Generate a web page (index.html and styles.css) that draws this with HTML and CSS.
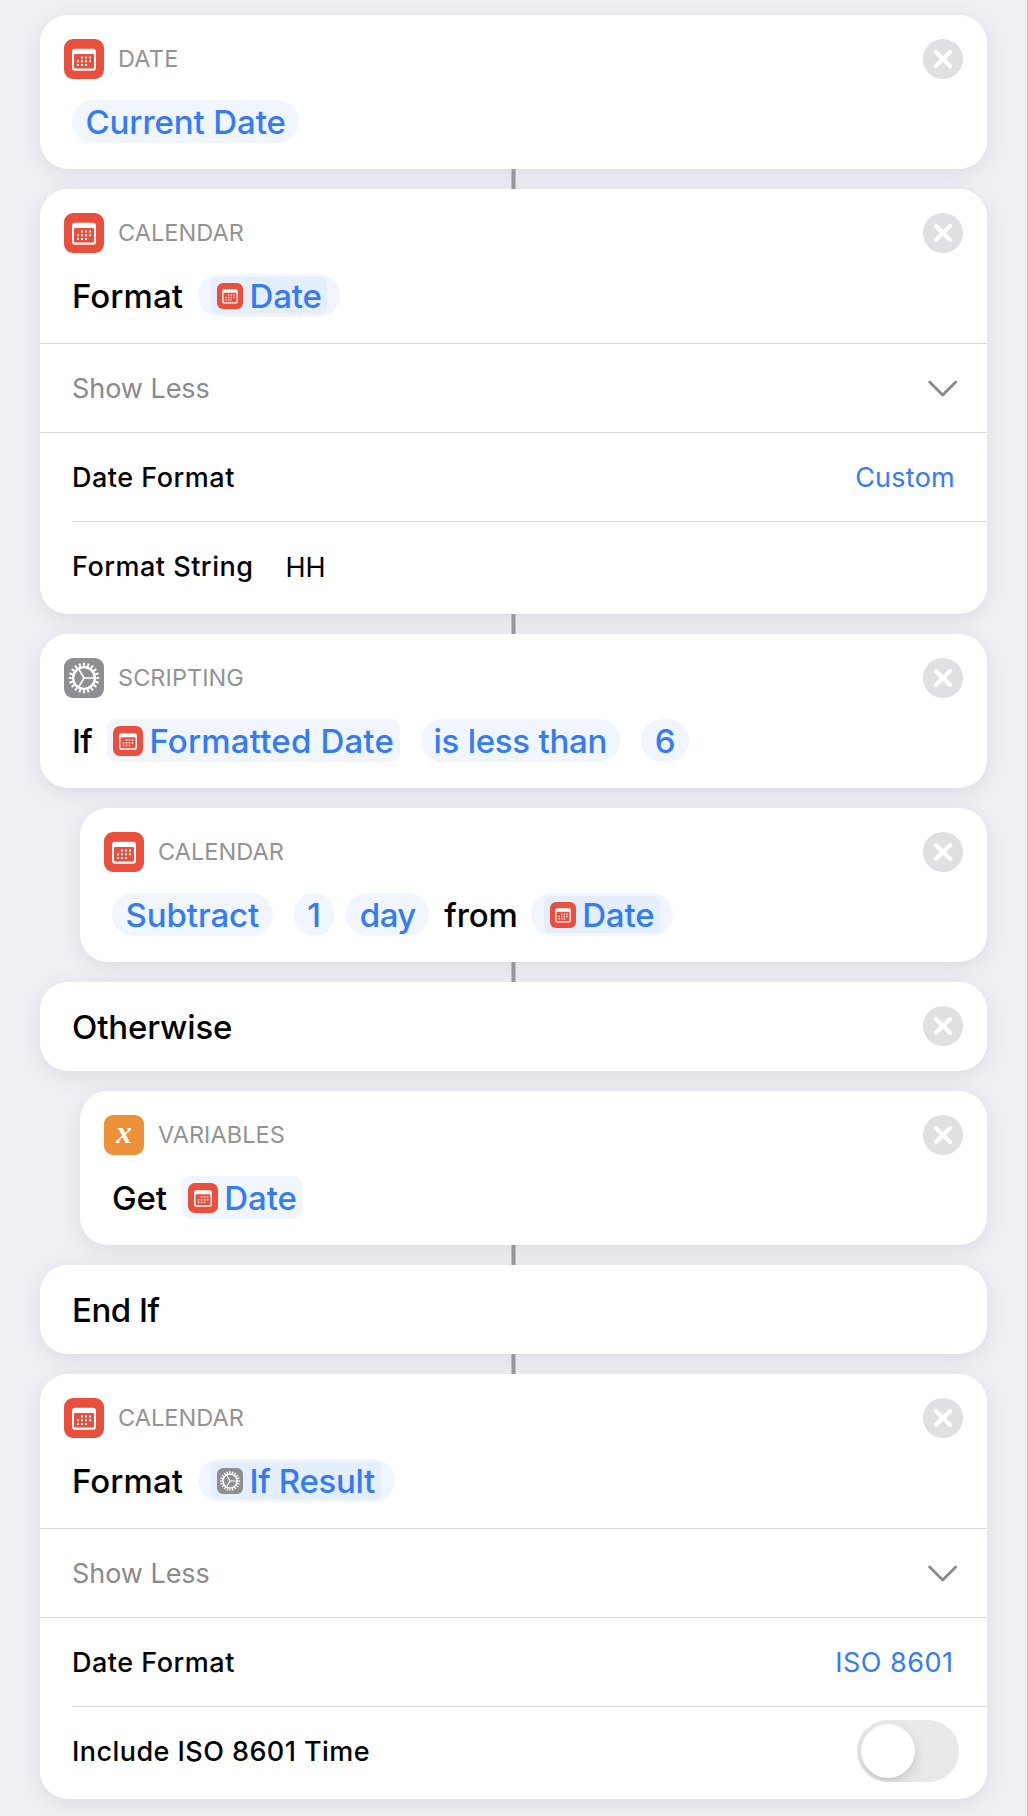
FILE: index.html
```
<!DOCTYPE html>
<html lang="en">
<head>
<meta charset="utf-8">
<title>Shortcut</title>
<link rel="stylesheet" href="styles.css">
</head>
<body>
<svg class="defs" aria-hidden="true">
  <symbol id="calendar" viewBox="0 0 40 40">
    <path fill="#fff" fill-rule="evenodd" d="M11 9.7h18a3 3 0 0 1 3 3V28.700a3 3 0 0 1-3 3H11a3 3 0 0 1-3-3V12.700a3 3 0 0 1 3-3zM11.300 14.900a1.300 1.300 0 0 0-1.300 1.300V28.300a1.300 1.300 0 0 0 1.300 1.300h17.400A1.300 1.300 0 0 0 30 28.300V16.200a1.300 1.300 0 0 0-1.300-1.300z"/>
    <path stroke="#fff" stroke-width="2" stroke-dasharray="2 2" d="M17 18.500h10M13 22.300h14M13 26.100h10"/>
  </symbol>
  <symbol id="gear" viewBox="0 0 40 40">
    <g fill="none" stroke="#fff">
      <circle cx="20" cy="20" r="10.900" stroke-width="2.400"/>
      <circle cx="20" cy="20" r="13.300" stroke-width="3.800" pathLength="40" stroke-dasharray="0.9 1.1" stroke-dashoffset="0.45"/>
      <path stroke-width="1.700" d="M20 20h10.500M20 20l-5.300-9.200M20 20l-5.300 9.200"/>
    </g>
  </symbol>
  <symbol id="close" viewBox="0 0 40 40">
    <circle cx="20" cy="20" r="20" fill="#e0e0e2"/>
    <path fill="none" stroke="#fff" stroke-width="4.200" stroke-linecap="round" d="M12.900 12.900l14.200 14.200M27.100 12.900L12.900 27.100"/>
  </symbol>
  <symbol id="chevron" viewBox="0 0 30 18">
    <path fill="none" stroke="#8a8a8e" stroke-width="2.800" stroke-linecap="round" stroke-linejoin="round" d="M1.700 2l13 13 13-13"/>
  </symbol>
</svg>
<main class="flow">
  <section class="card">
    <header class="head"><svg class="icon red"><use href="#calendar"/></svg><span class="kind wide">DATE</span><svg class="close"><use href="#close"/></svg></header>
    <div class="action"><span class="pill">Current Date</span></div>
  </section>
  <div class="link line"></div>
  <section class="card">
    <header class="head"><svg class="icon red"><use href="#calendar"/></svg><span class="kind">CALENDAR</span><svg class="close"><use href="#close"/></svg></header>
    <div class="action"><span class="word format">Format</span><span class="pill holder"><span class="inner"><svg class="mini red"><use href="#calendar"/></svg>Date</span></span></div>
    <div class="row toggle-row"><span class="muted">Show Less</span><svg class="chevron"><use href="#chevron"/></svg></div>
    <div class="row"><span class="label">Date Format</span><span class="choice">Custom</span></div>
    <div class="row inset last"><span class="label">Format String</span><span class="entry">HH</span></div>
  </section>
  <div class="link line"></div>
  <section class="card">
    <header class="head"><svg class="icon gray"><use href="#gear"/></svg><span class="kind">SCRIPTING</span><svg class="close"><use href="#close"/></svg></header>
    <div class="action"><span class="word if">If</span><span class="pill token long"><svg class="mini red"><use href="#calendar"/></svg>Formatted Date</span><span class="pill cond">is less than</span><span class="pill">6</span></div>
  </section>
  <div class="link"></div>
  <section class="card nested">
    <header class="head"><svg class="icon red"><use href="#calendar"/></svg><span class="kind">CALENDAR</span><svg class="close"><use href="#close"/></svg></header>
    <div class="action"><span class="pill">Subtract</span><span class="pill">1</span><span class="pill unit">day</span><span class="word from">from</span><span class="pill holder"><span class="inner"><svg class="mini red"><use href="#calendar"/></svg>Date</span></span></div>
  </section>
  <div class="link line"></div>
  <section class="card bar"><span class="word">Otherwise</span><svg class="close"><use href="#close"/></svg></section>
  <div class="link"></div>
  <section class="card nested">
    <header class="head"><svg class="icon orange" viewBox="0 0 40 40"><text class="var" x="20" y="27.700">x</text></svg><span class="kind">VARIABLES</span><svg class="close"><use href="#close"/></svg></header>
    <div class="action"><span class="word">Get</span><span class="pill token"><svg class="mini red"><use href="#calendar"/></svg>Date</span></div>
  </section>
  <div class="link line"></div>
  <section class="card bar"><span class="word end">End If</span></section>
  <div class="link line"></div>
  <section class="card">
    <header class="head"><svg class="icon red"><use href="#calendar"/></svg><span class="kind">CALENDAR</span><svg class="close"><use href="#close"/></svg></header>
    <div class="action"><span class="word format">Format</span><span class="pill holder"><span class="inner result"><svg class="mini gray"><use href="#gear"/></svg>If Result</span></span></div>
    <div class="row toggle-row"><span class="muted">Show Less</span><svg class="chevron"><use href="#chevron"/></svg></div>
    <div class="row"><span class="label">Date Format</span><span class="choice iso">ISO 8601</span></div>
    <div class="row inset last"><span class="label long-label">Include ISO 8601 Time</span><span class="switch"><span class="knob"></span></span></div>
  </section>
</main>
</body>
</html>
```
FILE: styles.css
```
* { box-sizing: border-box; }

body {
  margin: 0;
  height: 1816px;
  overflow: hidden;
  background: #f0eff5;
  border-right: 1px solid #c3c3c8;
  font-family: Inter, "Liberation Sans", sans-serif;
  color: #000;
}

.defs { display: none; }

.flow {
  display: flex;
  flex-direction: column;
  padding: 15px 40px 17px;
  isolation: isolate;
}

.card {
  position: relative;
  background: #fff;
  border-radius: 28px;
}

/* The shadow sits under every card, so it never falls on a neighbour. */
.card::before {
  content: "";
  position: absolute;
  inset: 0;
  z-index: -1;
  border-radius: inherit;
  box-shadow: 0 5px 22px rgba(0, 0, 10, 0.085);
}

.nested { margin-left: 40px; }

.link { height: 20px; flex: none; }

.line {
  align-self: center;
  width: 5px;
  background: #95959c;
  border: solid #bdbdc3;
  border-width: 0 1px;
}

.head {
  display: flex;
  align-items: center;
  padding: 24px 24px 0;
}

.icon {
  width: 40px;
  height: 40px;
  border-radius: 9px;
  overflow: visible;
}

.red { background: #ea4f3d; }
.gray { background: #8f8e93; }
.orange { background: #ec9039; }

.var {
  fill: #fff;
  font: italic bold 31px "Liberation Serif", serif;
  text-anchor: middle;
}

.kind {
  margin-left: 14px;
  font-size: 23.5px;
  line-height: 40px;
  letter-spacing: 0.05px;
  color: #939395;
}

.kind.wide { letter-spacing: 0.2px; }

.close {
  width: 40px;
  height: 40px;
  margin-left: auto;
}

.action {
  display: flex;
  align-items: center;
  height: 90px;
  padding: 0 32px 5px;
  font-size: 33px;
  font-weight: 500;
  white-space: nowrap;
}

.word { line-height: 42px; letter-spacing: -0.15px; }
.word.format { letter-spacing: 0.05px; }
.word.if { letter-spacing: -0.8px; }
.word.end { letter-spacing: -0.5px; }
.action .word { padding-top: 1px; }

.pill {
  display: flex;
  align-items: center;
  height: 43px;
  padding: 1px 13.5px 0;
  border-radius: 22px;
  background: #f0f5fe;
  color: #347bf6;
  line-height: 42px;
  letter-spacing: -0.1px;
}

.word + .pill { margin-left: 15.5px; }
.pill + .word { margin-left: 15px; }
.pill + .pill { margin-left: 21px; }
.pill + .unit { margin-left: 12px; letter-spacing: -0.5px; }
.from + .pill { margin-left: 13.5px; }
.pill.cond { letter-spacing: -0.25px; padding-left: 13px; padding-right: 13px; }

.pill.token {
  padding: 0 5.5px 0 6px;
  border-radius: 9px;
}

.token.long { letter-spacing: 0.18px; }

.pill.holder { padding: 0 13.5px 0 13px; }

.inner {
  display: flex;
  align-items: center;
  height: 37px;
  padding: 0 5px 0 6px;
  border-radius: 7px;
  background: #e4eefd;
}

.inner.result { letter-spacing: -0.3px; padding-right: 6px; }

.mini {
  width: 26px;
  height: 26px;
  margin-right: 6px;
  border-radius: 6px;
}

.token .mini {
  width: 30px;
  height: 30px;
  border-radius: 7px;
}

.bar {
  display: flex;
  align-items: center;
  height: 89px;
  padding: 0 24px 0 32px;
  font-size: 33px;
  font-weight: 500;
}

.bar .close { margin-bottom: 1px; }

.row {
  display: flex;
  align-items: center;
  height: 89px;
  padding: 0 32px;
  border-top: 1px solid #d9d9db;
  font-size: 27px;
  white-space: nowrap;
}

.row.inset {
  margin-left: 32px;
  padding-left: 0;
  padding-right: 28px;
}

.row.last { height: 93px; padding-bottom: 4px; }

.toggle-row { padding-right: 29px; }

.muted { color: #8a8a8e; letter-spacing: -0.05px; }

.chevron { width: 30px; height: 18px; margin: 2px 0 0 auto; }

.label { font-weight: 500; letter-spacing: 0.5px; }
.long-label { letter-spacing: 0.44px; }

.choice { margin-left: auto; color: #347bf6; letter-spacing: 0.25px; }
.choice.iso { letter-spacing: 0.5px; margin-right: 1.5px; }

.entry { margin-left: 32px; padding-top: 2px; }

.switch {
  width: 102px;
  height: 62px;
  margin-left: auto;
  padding: 4px;
  border-radius: 31px;
  background: #e9e9ea;
  overflow: hidden;
}

.knob {
  display: block;
  width: 54px;
  height: 54px;
  border-radius: 50%;
  background: #fff;
  box-shadow: 0 5px 14px rgba(0, 0, 0, 0.13), 0 2px 2px rgba(0, 0, 0, 0.04);
}
```
